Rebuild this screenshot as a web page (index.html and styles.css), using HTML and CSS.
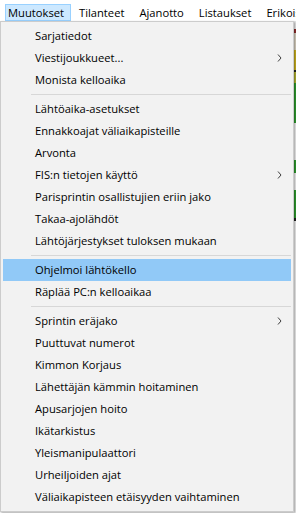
FILE: index.html
```html
<!DOCTYPE html>
<html>
<head>
<meta charset="utf-8">
<link rel="stylesheet" href="styles.css">
</head>
<body>
<div class="app">
  <div class="menubar">
    <div class="mb-item active">Muutokset</div>
    <div class="mb-item">Tilanteet</div>
    <div class="mb-item">Ajanotto</div>
    <div class="mb-item">Listaukset</div>
    <div class="mb-item">Erikoistoiminnot</div>
  </div>
  <div class="main">
    <div class="dropdown">
      <div class="item"><span class="label">Sarjatiedot</span></div>
      <div class="item"><span class="label">Viestijoukkueet...</span><svg class="chev" width="5" height="8" viewBox="0 0 5 8"><polyline points="1,0.5 4,4 1,7.5" fill="none" stroke="#404040" stroke-width="1"/></svg></div>
      <div class="item"><span class="label">Monista kelloaika</span></div>
      <div class="sep"></div>
      <div class="item"><span class="label">Lähtöaika-asetukset</span></div>
      <div class="item"><span class="label">Ennakkoajat väliaikapisteille</span></div>
      <div class="item"><span class="label">Arvonta</span></div>
      <div class="item"><span class="label">FIS:n tietojen käyttö</span><svg class="chev" width="5" height="8" viewBox="0 0 5 8"><polyline points="1,0.5 4,4 1,7.5" fill="none" stroke="#404040" stroke-width="1"/></svg></div>
      <div class="item"><span class="label">Parisprintin osallistujien eriin jako</span></div>
      <div class="item"><span class="label">Takaa-ajolähdöt</span></div>
      <div class="item"><span class="label">Lähtöjärjestykset tuloksen mukaan</span></div>
      <div class="sep"></div>
      <div class="item hover"><span class="label">Ohjelmoi lähtökello</span></div>
      <div class="item"><span class="label">Räplää PC:n kelloaikaa</span></div>
      <div class="sep"></div>
      <div class="item"><span class="label">Sprintin eräjako</span><svg class="chev" width="5" height="8" viewBox="0 0 5 8"><polyline points="1,0.5 4,4 1,7.5" fill="none" stroke="#404040" stroke-width="1"/></svg></div>
      <div class="item"><span class="label">Puuttuvat numerot</span></div>
      <div class="item"><span class="label">Kimmon Korjaus</span></div>
      <div class="item"><span class="label">Lähettäjän kämmin hoitaminen</span></div>
      <div class="item"><span class="label">Apusarjojen hoito</span></div>
      <div class="item"><span class="label">Ikätarkistus</span></div>
      <div class="item"><span class="label">Yleismanipulaattori</span></div>
      <div class="item"><span class="label">Urheiljoiden ajat</span></div>
      <div class="item"><span class="label">Väliaikapisteen etäisyyden vaihtaminen</span></div>
    </div>
    <div class="strip"></div>
  </div>
</div>
</body>
</html>
```

FILE: styles.css
```css
html, body {
  margin: 0;
  padding: 0;
  background: #ffffff;
}

body {
  width: 296px;
  height: 513px;
  overflow: hidden;
  font-family: "Open Sans", "Noto Sans", sans-serif;
  font-size: 11.2px;
  color: #000000;
}

.app {
  display: flex;
  flex-direction: column;
  height: 513px;
}

.menubar {
  display: flex;
  height: 21px;
  box-sizing: border-box;
  padding: 4px 0 0 5px;
  background: #ffffff;
  white-space: nowrap;
  overflow: hidden;
}

.mb-item {
  height: 17px;
  box-sizing: border-box;
  border: 1px solid transparent;
  padding: 0 6px 0 7px;
  line-height: 15px;
  flex: none;
}

.mb-item.active {
  background: #cce8ff;
  border-color: #99d1ff;
  padding: 0 6px 0 2px;
}

.main {
  display: flex;
  flex: 1;
  min-height: 0;
}

.dropdown {
  width: 294px;
  flex: none;
  box-sizing: border-box;
  background: #f2f2f2;
  border: 1px solid #cccccc;
  padding: 3px 2px;
  box-shadow: 1px 1px 2px rgba(0, 0, 0, 0.35);
  position: relative;
  z-index: 1;
  align-self: flex-start;
}

.item {
  display: flex;
  align-items: center;
  height: 22px;
  line-height: 22px;
  padding: 0 9px 0 32px;
  white-space: nowrap;
}

.item .label {
  flex: 1;
}

.item.hover {
  background: #91c9f7;
}

.chev {
  display: block;
  flex: none;
}

.sep {
  height: 1px;
  margin: 3px 0 3px 28px;
  background: #d7d7d7;
}

.strip {
  flex: 1;
  background: linear-gradient(to bottom,
    #e8e8e8 0px, #e8e8e8 8px,
    #8c2a2a 8px, #8c2a2a 12px,
    #d8d0c0 12px, #d8d0c0 29px,
    #c8b020 29px, #c8b020 49px,
    #202020 49px, #202020 51px,
    #b0b030 51px, #b0b030 62px,
    #2e9a2e 62px, #2e9a2e 102px,
    #f0f0f0 102px, #f0f0f0 139px,
    #2e9a2e 139px, #2e9a2e 152px,
    #f0f0f0 152px, #f0f0f0 169px,
    #2e9a2e 169px, #2e9a2e 197px,
    #202020 197px, #202020 200px,
    #f0f0f0 200px, #f0f0f0 100%);
}
```
